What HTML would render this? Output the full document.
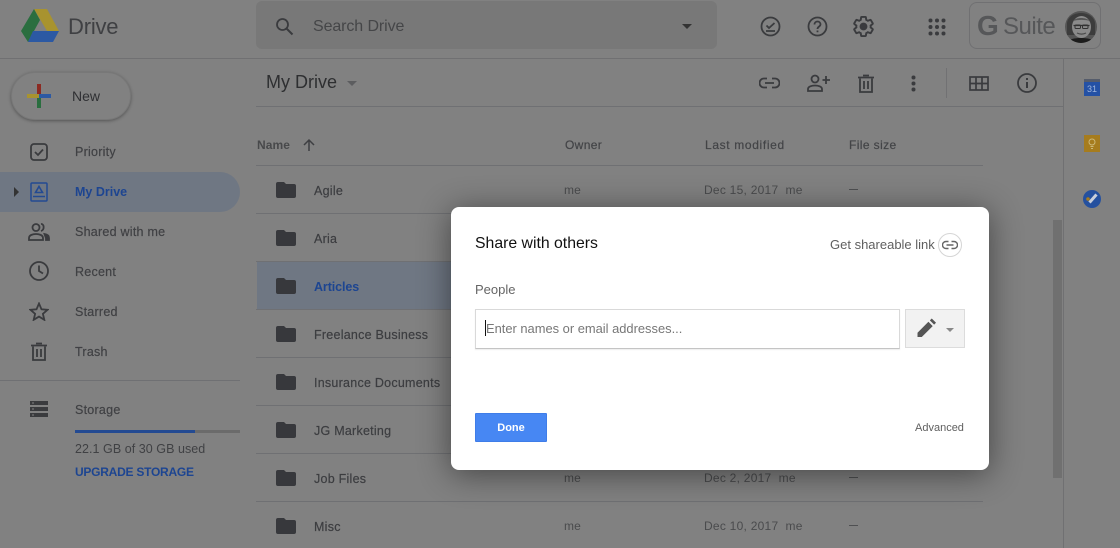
<!DOCTYPE html>
<html><head><meta charset="utf-8"><style>
html,body{margin:0;padding:0}
body{width:1120px;height:548px;overflow:hidden;position:relative;background:#818181;font-family:"Liberation Sans",sans-serif;color:#3a3b3d}
.a,.t,svg{position:absolute}
.t{white-space:nowrap;line-height:16px}
.n{font-size:12.5px;color:#3c3d40;letter-spacing:.25px;-webkit-text-stroke:.2px currentColor}
.h{font-size:12px;color:#434447;letter-spacing:.35px;-webkit-text-stroke:.2px currentColor}
.m{font-size:12px;color:#4a4b4d;letter-spacing:.1px}
.d{width:9px;height:1px;background:#4f5052}
.l{height:1px;background:#6f7073}
.i path,.i circle,.i rect{fill:none;stroke:#3a3b3e;stroke-width:1.8}
</style></head><body>
<!-- top -->
<div class="a l" style="left:0;top:58px;width:1120px;background:#707072"></div>
<svg style="left:20px;top:8px" width="40" height="36" viewBox="0 0 40 36"><path d="M14 1h13l12 22H27z" fill="#a8932f"/><path d="M14 1l6 11-12 22-7-11z" fill="#2a6e3f"/><path d="M13 23h26l-6 11H8z" fill="#2c59a3"/></svg>
<div class="t" style="left:68px;top:14px;font-size:22px;line-height:26px;color:#3f4043;letter-spacing:-.2px">Drive</div>
<div class="a" style="left:256px;top:1px;width:461px;height:48px;background:#787878;border-radius:6px"></div>
<svg class="i" style="left:275px;top:17px" width="19" height="19" viewBox="0 0 19 19"><circle cx="7.500" cy="7.500" r="5.500" style="stroke-width:1.800"/><path d="M11.500 11.500l6 6" style="stroke-width:2"/></svg>
<div class="t" style="left:313px;top:17px;font-size:16px;line-height:20px;color:#454648;letter-spacing:-.1px">Search Drive</div>
<div class="a" style="left:682px;top:24px;border:5.500px solid transparent;border-top:5.500px solid #333;border-bottom:0"></div>
<svg class="i" style="left:760px;top:16px" width="21" height="21" viewBox="0 0 21 21"><circle cx="10.500" cy="10.500" r="9"/><path d="M6.500 9.500l2.500 2.500 5.500-5M6 15h9"/></svg>
<svg class="i" style="left:807px;top:16px" width="21" height="21" viewBox="0 0 21 21"><circle cx="10.500" cy="10.500" r="9"/><path d="M7.500 8.500c0-4 6-4 6 0 0 2-3 2-3 4.500M10.500 14.500v1.800"/></svg>
<svg class="i" style="left:852px;top:15px" width="23" height="23" viewBox="0 0 24 24"><path d="M19.430 12.980c.04-.32.07-.64.07-.98s-.03-.66-.07-.98l2.110-1.650c.19-.15.24-.42.12-.64l-2-3.460c-.12-.22-.39-.3-.61-.22l-2.490 1c-.52-.4-1.080-.73-1.690-.98l-.38-2.650C14.460 2.180 14.250 2 14 2h-4c-.25 0-.46.18-.49.42l-.38 2.650c-.61.25-1.170.59-1.690.98l-2.490-1c-.23-.09-.49 0-.61.22l-2 3.460c-.13.22-.07.49.12.64l2.110 1.650c-.04.32-.07.65-.07.98s.03.66.07.98l-2.110 1.650c-.19.15-.24.42-.12.64l2 3.460c.12.22.39.3.61.22l2.490-1c.52.4 1.080.73 1.690.98l.38 2.650c.03.24.24.42.49.42h4c.25 0 .46-.18.49-.42l.38-2.650c.61-.25 1.170-.59 1.690-.98l2.490 1c.23.09.49 0 .61-.22l2-3.460c.12-.22.07-.49-.12-.64l-2.110-1.650z" style="stroke-width:2"/><circle cx="12" cy="12" r="3.200" style="fill:#3a3b3e"/></svg>
<svg style="left:928px;top:18px" width="18" height="18" viewBox="0 0 18 18" fill="#3a3b3e"><circle cx="2.500" cy="2.500" r="2"/><circle cx="9" cy="2.500" r="2"/><circle cx="15.500" cy="2.500" r="2"/><circle cx="2.500" cy="9" r="2"/><circle cx="9" cy="9" r="2"/><circle cx="15.500" cy="9" r="2"/><circle cx="2.500" cy="15.500" r="2"/><circle cx="9" cy="15.500" r="2"/><circle cx="15.500" cy="15.500" r="2"/></svg>
<div class="a" style="left:969px;top:2px;width:132px;height:47px;border:1px solid #707072;border-radius:8px;box-sizing:border-box"></div>
<div class="t" style="left:977px;top:11px;font-size:28px;line-height:30px;color:#565759;font-weight:700">G</div>
<div class="t" style="left:1003px;top:12px;font-size:24px;line-height:30px;color:#565759;letter-spacing:-.5px">Suite</div>
<svg style="left:1065px;top:11px" width="32" height="32" viewBox="0 0 32 32"><defs><clipPath id="c"><circle cx="16" cy="16" r="16"/></clipPath></defs><g clip-path="url(#c)"><rect width="32" height="32" fill="#555"/><path d="M2 24V12C3 5 10 2 16 2s13 3 14 10v12z" fill="#3c3c3c"/><ellipse cx="16.500" cy="16" rx="9.500" ry="11" fill="#8a8a8a"/><path d="M8 10c3-4 13-4 17 0-5-1.500-12-1.500-17 0z" fill="#555"/><path d="M8.500 14.500h16" stroke="#333" stroke-width="1.200"/><rect x="10" y="14" width="5.500" height="3.500" rx="1" fill="none" stroke="#333"/><rect x="17.500" y="14" width="5.500" height="3.500" rx="1" fill="none" stroke="#333"/><path d="M12 22c3 1.500 6 1.500 9 0" stroke="#4a4a4a" stroke-width="1.200" fill="none"/><path d="M2 32c1-4 8-5 14-5s13 1 14 5z" fill="#1c1c1c"/></g></svg>
<!-- new -->
<div class="a" style="left:11px;top:72px;width:120px;height:48px;border-radius:24px;background:#818181;box-shadow:0 1px 3px rgba(0,0,0,.35);border:1px solid #787878;box-sizing:border-box"></div>
<svg style="left:27px;top:84px" width="24" height="24" viewBox="0 0 24 24"><rect x="10" width="4" height="12" fill="#8c2a22"/><rect y="10" width="12" height="4" fill="#a8932f"/><rect x="12" y="10" width="12" height="4" fill="#2c59a3"/><rect x="10" y="14" width="4" height="10" fill="#2a6e3f"/></svg>
<div class="t" style="left:72px;top:88px;font-size:14px;color:#2f3033">New</div>
<!-- nav -->
<div class="a" style="left:0;top:172px;width:240px;height:40px;background:#6f7783;border-radius:0 20px 20px 0"></div>
<div class="a" style="left:14px;top:187px;border:5px solid transparent;border-left:5px solid #333;border-right:0"></div>
<svg class="i" style="left:30px;top:143px" width="18" height="18" viewBox="0 0 18 18"><rect x="1" y="1" width="16" height="16" rx="3"/><path d="M5 9l3 3 5-5.500"/></svg>
<svg style="left:30px;top:182px" width="18" height="20" viewBox="0 0 18 20"><rect x="1" y="1" width="16" height="18" rx="1" fill="none" stroke="#234a92" stroke-width="1.500"/><path d="M9 4.500l3.500 6h-7zM3 14.500h12" fill="none" stroke="#234a92" stroke-width="1.600"/></svg>
<svg style="left:28px;top:222px" width="22" height="20" viewBox="0 0 22 20" fill="none" stroke="#3a3b3e" stroke-width="1.800"><circle cx="8" cy="5.500" r="3.500"/><path d="M1 18v-2c0-3 4-4 7-4s7 1 7 4v2zM13 2c3-.5 4 5.500 0 7"/><path d="M16.500 12c3 .5 4.500 1.500 4.500 4v2h-3v-2z" fill="#3a3b3e"/></svg>
<svg class="i" style="left:29px;top:261px" width="20" height="20" viewBox="0 0 20 20"><circle cx="10" cy="10" r="9"/><path d="M10 4.500V10l4 2.500"/></svg>
<svg class="i" style="left:29px;top:302px" width="20" height="19" viewBox="0 0 20 19"><path d="M10 1.500l2.500 5.800 6 .5-4.600 4 1.400 6L10 14.600 4.700 17.800l1.400-6-4.600-4 6-.5z"/></svg>
<svg class="i" style="left:31px;top:342px" width="16" height="19" viewBox="0 0 16 19"><path d="M2 4.500V18h12V4.500M0 3.500h16M5 1.500h6M6 7v8M10 7v8"/></svg>
<div class="t n" style="left:75px;top:144px;color:#404144">Priority</div>
<div class="t n" style="left:75px;top:184px;color:#1d4591;font-weight:700;letter-spacing:0;-webkit-text-stroke:0">My Drive</div>
<div class="t n" style="left:75px;top:224px;color:#404144">Shared with me</div>
<div class="t n" style="left:75px;top:264px;color:#404144">Recent</div>
<div class="t n" style="left:75px;top:304px;color:#404144">Starred</div>
<div class="t n" style="left:75px;top:344px;color:#404144">Trash</div>
<div class="a l" style="left:0;top:380px;width:240px"></div>
<svg style="left:30px;top:401px" width="18" height="16" viewBox="0 0 18 16" fill="#3a3b3e"><rect width="18" height="4"/><rect y="6" width="18" height="4"/><rect y="12" width="18" height="4"/><rect x="2" y="1.500" width="2" height="1" fill="#818181"/><rect x="2" y="7.500" width="2" height="1" fill="#818181"/><rect x="2" y="13.500" width="2" height="1" fill="#818181"/></svg>
<div class="t n" style="left:75px;top:402px;color:#404144">Storage</div>
<div class="a" style="left:75px;top:430px;width:165px;height:3px;background:#6b6b6b"></div>
<div class="a" style="left:75px;top:430px;width:120px;height:3px;background:#234a92"></div>
<div class="t n" style="left:75px;top:441px;color:#404144;letter-spacing:.05px;-webkit-text-stroke:0">22.1 GB of 30 GB used</div>
<div class="t" style="left:75px;top:464px;font-size:12px;color:#1d4591;font-weight:700;letter-spacing:-.25px">UPGRADE STORAGE</div>
<!-- toolbar -->
<div class="t" style="left:266px;top:70px;font-size:18px;line-height:24px;color:#2e2f31">My Drive</div>
<div class="a" style="left:347px;top:81px;border:5px solid transparent;border-top:5px solid #5c5d5f;border-bottom:0"></div>
<div class="a l" style="left:256px;top:106px;width:807px"></div>
<svg class="i" style="left:759px;top:76px" width="21" height="14" viewBox="0 0 21 14"><path d="M8 2.500H5a4.500 4.500 0 0 0 0 9h3M13 2.500h3a4.500 4.500 0 0 1 0 9h-3M6 7h9" style="stroke-width:1.800"/></svg>
<svg class="i" style="left:806px;top:73px" width="24" height="20" viewBox="0 0 24 20"><circle cx="9" cy="6" r="3.500"/><path d="M2 18v-2c0-2.500 4-3.500 7-3.500s7 1 7 3.500v2zM20 3v8M16.500 7h7.500"/></svg>
<svg class="i" style="left:858px;top:74px" width="16" height="19" viewBox="0 0 16 19"><path d="M2 4.500V18h12V4.500M0 3.500h16M5 1.500h6M6 7v8M10 7v8"/></svg>
<svg style="left:911px;top:75px" width="5" height="17" viewBox="0 0 5 17" fill="#3a3b3e"><circle cx="2.500" cy="2.500" r="2"/><circle cx="2.500" cy="8.500" r="2"/><circle cx="2.500" cy="14.500" r="2"/></svg>
<div class="a" style="left:946px;top:68px;width:1px;height:30px;background:#717173"></div>
<svg style="left:969px;top:76px" width="20" height="15" viewBox="0 0 20 15" fill="none" stroke="#3a3b3e" stroke-width="1.700"><rect x="1" y="1" width="18" height="13"/><path d="M1 7.500h18M7 1v13M13 1v13"/></svg>
<svg class="i" style="left:1017px;top:73px" width="20" height="20" viewBox="0 0 20 20"><circle cx="10" cy="10" r="9"/><path d="M10 9v6M10 5v2" style="stroke-width:2"/></svg>
<!-- table -->
<div class="t h" style="left:257px;top:137px;font-weight:700;color:#48494b;letter-spacing:.1px;-webkit-text-stroke:0">Name</div>
<svg style="left:302px;top:138px" width="14" height="14" viewBox="0 0 14 14" fill="none" stroke="#3e3f42" stroke-width="1.500"><path d="M7 13V2M2 7l5-5 5 5"/></svg>
<div class="t h" style="left:565px;top:137px">Owner</div>
<div class="t h" style="left:705px;top:137px;letter-spacing:.65px">Last modified</div>
<div class="t h" style="left:849px;top:137px;letter-spacing:.4px">File size</div>
<div class="a l" style="left:256px;top:165px;width:727px"></div>
<div class="a l" style="left:256px;top:213px;width:727px"></div>
<div class="a" style="left:257px;top:262px;width:726px;height:48px;background:#6f7783"></div>
<div class="a l" style="left:256px;top:261px;width:727px"></div>
<div class="a l" style="left:256px;top:309px;width:727px"></div>
<div class="a l" style="left:256px;top:357px;width:727px"></div>
<div class="a l" style="left:256px;top:405px;width:727px"></div>
<div class="a l" style="left:256px;top:453px;width:727px"></div>
<div class="a l" style="left:256px;top:501px;width:727px"></div>
<svg style="left:276px;top:182px" width="20" height="16" viewBox="0 0 20 16" fill="#37383c"><path d="M2 0h6l2 2h8a2 2 0 0 1 2 2v10a2 2 0 0 1-2 2H2a2 2 0 0 1-2-2V2a2 2 0 0 1 2-2z"/></svg>
<svg style="left:276px;top:230px" width="20" height="16" viewBox="0 0 20 16" fill="#37383c"><path d="M2 0h6l2 2h8a2 2 0 0 1 2 2v10a2 2 0 0 1-2 2H2a2 2 0 0 1-2-2V2a2 2 0 0 1 2-2z"/></svg>
<svg style="left:276px;top:278px" width="20" height="16" viewBox="0 0 20 16" fill="#37383c"><path d="M2 0h6l2 2h8a2 2 0 0 1 2 2v10a2 2 0 0 1-2 2H2a2 2 0 0 1-2-2V2a2 2 0 0 1 2-2z"/></svg>
<svg style="left:276px;top:326px" width="20" height="16" viewBox="0 0 20 16" fill="#37383c"><path d="M2 0h6l2 2h8a2 2 0 0 1 2 2v10a2 2 0 0 1-2 2H2a2 2 0 0 1-2-2V2a2 2 0 0 1 2-2z"/></svg>
<svg style="left:276px;top:374px" width="20" height="16" viewBox="0 0 20 16" fill="#37383c"><path d="M2 0h6l2 2h8a2 2 0 0 1 2 2v10a2 2 0 0 1-2 2H2a2 2 0 0 1-2-2V2a2 2 0 0 1 2-2z"/></svg>
<svg style="left:276px;top:422px" width="20" height="16" viewBox="0 0 20 16" fill="#37383c"><path d="M2 0h6l2 2h8a2 2 0 0 1 2 2v10a2 2 0 0 1-2 2H2a2 2 0 0 1-2-2V2a2 2 0 0 1 2-2z"/></svg>
<svg style="left:276px;top:470px" width="20" height="16" viewBox="0 0 20 16" fill="#37383c"><path d="M2 0h6l2 2h8a2 2 0 0 1 2 2v10a2 2 0 0 1-2 2H2a2 2 0 0 1-2-2V2a2 2 0 0 1 2-2z"/></svg>
<svg style="left:276px;top:518px" width="20" height="16" viewBox="0 0 20 16" fill="#37383c"><path d="M2 0h6l2 2h8a2 2 0 0 1 2 2v10a2 2 0 0 1-2 2H2a2 2 0 0 1-2-2V2a2 2 0 0 1 2-2z"/></svg>
<div class="t n" style="left:314px;top:183px">Agile</div>
<div class="t n" style="left:314px;top:231px">Aria</div>
<div class="t n" style="left:314px;top:279px;color:#1d4591;font-weight:700;letter-spacing:-.1px;-webkit-text-stroke:0">Articles</div>
<div class="t n" style="left:314px;top:327px">Freelance Business</div>
<div class="t n" style="left:314px;top:375px">Insurance Documents</div>
<div class="t n" style="left:314px;top:423px">JG Marketing</div>
<div class="t n" style="left:314px;top:471px">Job Files</div>
<div class="t n" style="left:314px;top:519px">Misc</div>
<div class="t m" style="left:564px;top:182px">me</div>
<div class="t m" style="left:704px;top:182px;letter-spacing:.25px">Dec 15, 2017&nbsp; me</div>
<div class="a d" style="left:849px;top:189px"></div>
<div class="t m" style="left:564px;top:470px">me</div>
<div class="t m" style="left:704px;top:470px;letter-spacing:.25px">Dec 2, 2017&nbsp; me</div>
<div class="a d" style="left:849px;top:477px"></div>
<div class="t m" style="left:564px;top:518px">me</div>
<div class="t m" style="left:704px;top:518px;letter-spacing:.25px">Dec 10, 2017&nbsp; me</div>
<div class="a d" style="left:849px;top:525px"></div>
<!-- right rail -->
<div class="a" style="left:1063px;top:59px;width:1px;height:489px;background:#707072"></div>
<div class="a" style="left:1053px;top:220px;width:9px;height:258px;background:#707070"></div>
<div class="a" style="left:1084px;top:79px;width:16px;height:17px;background:#2451a5"></div>
<div class="a" style="left:1084px;top:79px;width:16px;height:3px;background:#555c6b"></div>
<div class="t" style="left:1084px;top:83px;width:16px;text-align:center;font-size:9px;line-height:12px;color:#9fb5dc">31</div>
<div class="a" style="left:1084px;top:135px;width:16px;height:17px;background:#a67c1e"></div>
<svg style="left:1084px;top:135px" width="16" height="17" viewBox="0 0 16 17" fill="none" stroke="#cdb878"><circle cx="8" cy="7" r="3"/><path d="M6.500 11.500h3M7 13.500h2"/></svg>
<div class="a" style="left:1083px;top:190px;width:18px;height:18px;border-radius:50%;background:#24509f"></div>
<svg style="left:1083px;top:190px" width="18" height="18" viewBox="0 0 18 18"><path d="M6.500 12.500l7-8" stroke="#c9cfdb" stroke-width="3"/><circle cx="5" cy="9" r="1.800" fill="#a67c1e"/></svg>
<!-- dialog -->
<div class="a" style="left:451px;top:207px;width:538px;height:263px;background:#fff;border-radius:8px;box-shadow:0 4px 32px rgba(0,0,0,.48)"></div>
<div class="t" style="left:475px;top:235px;font-size:15.800px;line-height:18px;color:#111">Share with others</div>
<div class="t" style="left:830px;top:237px;font-size:13px;color:#5f5f5f">Get shareable link</div>
<div class="a" style="left:938px;top:233px;width:24px;height:24px;border:1px solid #d5d5d5;border-radius:50%;box-sizing:border-box"></div>
<svg style="left:942px;top:240px" width="16" height="10" viewBox="0 0 16 10" fill="none" stroke="#666" stroke-width="1.400"><path d="M6.500 1.500H4a3.500 3.500 0 0 0 0 7h2.500M9.500 1.500H12a3.500 3.500 0 0 1 0 7H9.500M4.500 5h7"/></svg>
<div class="t" style="left:475px;top:282px;font-size:13px;color:#666">People</div>
<div class="a" style="left:475px;top:309px;width:425px;height:40px;box-sizing:border-box;border:1px solid #d9d9d9;border-bottom-color:#c4c4c4;box-shadow:0 1px 1px rgba(0,0,0,.08)"></div>
<div class="a" style="left:485px;top:320px;width:1px;height:16px;background:#111"></div>
<div class="t" style="left:486px;top:321px;font-size:12.900px;color:#777">Enter names or email addresses...</div>
<div class="a" style="left:905px;top:309px;width:60px;height:39px;box-sizing:border-box;background:#f2f2f2;border:1px solid #dcdcdc"></div>
<svg style="left:917px;top:318px" width="20" height="19" viewBox="0 0 20 20" fill="#555"><path d="M0 20v-4.500L11.500 4l4.500 4.500L4.500 20zM13 2.500L15 .5l4.500 4.500-2 2z"/></svg>
<div class="a" style="left:946px;top:328px;border:4px solid transparent;border-top:4px solid #888;border-bottom:0"></div>
<div class="a" style="left:475px;top:413px;width:72px;height:29px;background:#4787f3;border-radius:1px;border:1px solid #3f7de8;box-sizing:border-box"></div>
<div class="t" style="left:475px;top:420px;width:72px;text-align:center;font-size:11px;font-weight:700;color:#fff">Done</div>
<div class="t" style="left:915px;top:420px;font-size:11px;color:#5f5f5f">Advanced</div>
</body></html>
